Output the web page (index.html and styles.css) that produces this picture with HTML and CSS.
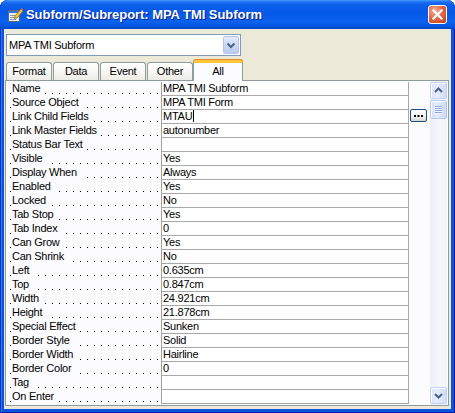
FILE: index.html
```html
<!DOCTYPE html>
<html>
<head>
<meta charset="utf-8">
<link rel="stylesheet" href="styles.css">
</head>
<body>
<div class="window">
  <div class="titlebar">
    <svg class="app-icon" width="16" height="16" viewBox="0 0 16 16">
      <rect x="1.5" y="3.5" width="11" height="11" fill="#F2F2EE" stroke="#55698F"/>
      <rect x="2" y="4" width="10" height="2" fill="#3D72D6"/>
      <rect x="3" y="8" width="5" height="1" fill="#8896B0"/>
      <rect x="3" y="10" width="7" height="1" fill="#8896B0"/>
      <rect x="3" y="12" width="6" height="1" fill="#8896B0"/>
      <polygon points="8,9 14,2 16,4 10,11 7.5,11.5" fill="#F6C23A" stroke="#9A6A10" stroke-width="0.8"/>
      <polygon points="14,2 15,1 16.5,2.5 16,4" fill="#E0603A"/>
    </svg>
    <span class="title">Subform/Subreport: MPA TMI Subform</span>
    <div class="close">
      <svg width="17" height="17" viewBox="0 0 17 17">
        <path d="M4.5 4.5 L12.5 12.5 M12.5 4.5 L4.5 12.5" stroke="#fff" stroke-width="2.2" stroke-linecap="square"/>
      </svg>
    </div>
  </div>
  <div class="client">
    <div class="combo">
      <span class="combo-text">MPA TMI Subform</span>
      <div class="combo-btn">
        <svg width="14" height="16" viewBox="0 0 14 16">
          <polyline points="3.5,6.5 7,10 10.5,6.5" fill="none" stroke="#4D6185" stroke-width="2"/>
        </svg>
      </div>
    </div>
    <div class="tabs">
      <div class="tab">Format</div>
      <div class="tab">Data</div>
      <div class="tab">Event</div>
      <div class="tab">Other</div>
      <div class="tab active">All</div>
    </div>
    <div class="page">
      <div class="grid">
        <div class="row"><div class="label"><span>Name</span></div><div class="value">MPA TMI Subform</div></div>
        <div class="row"><div class="label"><span>Source Object</span></div><div class="value">MPA TMI Form</div></div>
        <div class="row"><div class="label"><span>Link Child Fields</span></div><div class="value">MTAU<i class="caret"></i></div></div>
        <div class="row"><div class="label"><span>Link Master Fields</span></div><div class="value">autonumber</div></div>
        <div class="row"><div class="label"><span>Status Bar Text</span></div><div class="value"></div></div>
        <div class="row"><div class="label"><span>Visible</span></div><div class="value">Yes</div></div>
        <div class="row"><div class="label"><span>Display When</span></div><div class="value">Always</div></div>
        <div class="row"><div class="label"><span>Enabled</span></div><div class="value">Yes</div></div>
        <div class="row"><div class="label"><span>Locked</span></div><div class="value">No</div></div>
        <div class="row"><div class="label"><span>Tab Stop</span></div><div class="value">Yes</div></div>
        <div class="row"><div class="label"><span>Tab Index</span></div><div class="value">0</div></div>
        <div class="row"><div class="label"><span>Can Grow</span></div><div class="value">Yes</div></div>
        <div class="row"><div class="label"><span>Can Shrink</span></div><div class="value">No</div></div>
        <div class="row"><div class="label"><span>Left</span></div><div class="value">0.635cm</div></div>
        <div class="row"><div class="label"><span>Top</span></div><div class="value">0.847cm</div></div>
        <div class="row"><div class="label"><span>Width</span></div><div class="value">24.921cm</div></div>
        <div class="row"><div class="label"><span>Height</span></div><div class="value">21.878cm</div></div>
        <div class="row"><div class="label"><span>Special Effect</span></div><div class="value">Sunken</div></div>
        <div class="row"><div class="label"><span>Border Style</span></div><div class="value">Solid</div></div>
        <div class="row"><div class="label"><span>Border Width</span></div><div class="value">Hairline</div></div>
        <div class="row"><div class="label"><span>Border Color</span></div><div class="value">0</div></div>
        <div class="row"><div class="label"><span>Tag</span></div><div class="value"></div></div>
        <div class="row"><div class="label"><span>On Enter</span></div><div class="value"></div></div>
      </div>
      <div class="btncol">
        <div class="ellipsis">
          <svg width="15" height="11" viewBox="0 0 15 11">
            <rect x="3" y="6" width="2" height="2" fill="#000"/>
            <rect x="6.5" y="6" width="2" height="2" fill="#000"/>
            <rect x="10" y="6" width="2" height="2" fill="#000"/>
          </svg>
        </div>
      </div>
      <div class="scrollbar">
        <div class="sb-btn">
          <svg width="15" height="15" viewBox="0 0 15 15">
            <polyline points="4,9 7.5,5.5 11,9" fill="none" stroke="#4D6185" stroke-width="2"/>
          </svg>
        </div>
        <div class="thumb">
          <span></span><span></span><span></span><span></span>
        </div>
        <div class="track"></div>
        <div class="sb-btn">
          <svg width="15" height="15" viewBox="0 0 15 15">
            <polyline points="4,6 7.5,9.5 11,6" fill="none" stroke="#4D6185" stroke-width="2"/>
          </svg>
        </div>
      </div>
    </div>
  </div>
</div>
</body>
</html>
```
FILE: styles.css
```css
html, body {
  margin: 0;
  padding: 0;
}
body {
  width: 455px;
  height: 413px;
  overflow: hidden;
  background: #ffffff;
  font-family: "Liberation Sans", Arial, sans-serif;
  font-size: 11px;
  color: #000;
}
.window {
  width: 455px;
  height: 413px;
  box-sizing: border-box;
  display: flex;
  flex-direction: column;
  background: #0A55E0;
  border-radius: 8px 8px 0 0;
  box-shadow: inset 1px 0 0 #0831C9, inset -1px 0 0 #001EA0, inset 0 -1px 0 #001EA0, inset 2px 0 0 #2D78F0;
  overflow: hidden;
}
.titlebar {
  height: 29px;
  flex: none;
  display: flex;
  align-items: center;
  padding: 0 8px 0 7px;
  background: linear-gradient(to bottom, #4A9BFF 0px, #1D70F2 2px, #0A5EE8 5px, #0458E6 45%, #0A62EE 75%, #0555E0 90%, #0046C6 100%);
  border-radius: 8px 8px 0 0;
}
.app-icon {
  flex: none;
  margin-right: 3px;
}
.title {
  color: #fff;
  font-weight: bold;
  font-size: 13px;
  letter-spacing: -0.05px;
  text-shadow: 1px 1px 0 #0A1E8A;
  white-space: nowrap;
}
.close {
  margin-left: auto;
  width: 19px;
  height: 19px;
  box-sizing: border-box;
  border: 1px solid #fff;
  border-radius: 3px;
  background: radial-gradient(circle at 35% 30%, #F5B39B 0%, #E46A49 45%, #CD4A2A 80%, #B83A1C 100%);
  display: flex;
  align-items: center;
  justify-content: center;
}
.client {
  flex: 1;
  margin: 0 4px 4px 4px;
  background: #ECE9D8;
  display: flex;
  flex-direction: column;
  min-height: 0;
}
.combo {
  margin: 5px 0 0 2px;
  width: 235px;
  height: 22px;
  box-sizing: border-box;
  border: 1px solid #7F9DB9;
  background: #fff;
  display: flex;
  align-items: center;
  padding-left: 2px;
  letter-spacing: -0.25px;
}
.combo-text {
  white-space: nowrap;
}
.combo-btn {
  margin-left: auto;
  margin-right: 1px;
  width: 16px;
  height: 18px;
  box-sizing: border-box;
  border: 1px solid #B3C5EE;
  border-radius: 2px;
  background: linear-gradient(to bottom, #E4EBFB 0%, #CCD9F6 50%, #BACBF1 100%);
  display: flex;
  align-items: center;
  justify-content: center;
}
.tabs {
  margin: 4px 0 0 2px;
  height: 20px;
  display: flex;
  align-items: flex-end;
  gap: 1px;
  position: relative;
  z-index: 1;
}
.tab {
  width: 46px;
  height: 18px;
  box-sizing: border-box;
  border: 1px solid #919B9C;
  border-bottom: none;
  border-radius: 3px 3px 0 0;
  background: linear-gradient(to bottom, #FFFFFF 0%, #F7F7F4 50%, #ECEBE5 100%);
  text-align: center;
  line-height: 17px;
  letter-spacing: -0.25px;
}
.tab.active {
  width: 50px;
  height: 21px;
  margin-left: -1px;
  margin-bottom: -1px;
  border-top: 3px solid #FFC73C;
  box-shadow: 0 -1px 0 #E68B2C;
  background: #FCFCFE;
  line-height: 16px;
  padding-bottom: 2px;
}
.page {
  flex: 1;
  margin: 0 2px 3px 1px;
  border: 1px solid #919B9C;
  background: #FCFCFE;
  display: flex;
  min-height: 0;
}
.grid {
  padding-top: 1px;
  width: 403px;
  flex: none;
}
.row {
  display: grid;
  grid-template-columns: 155px 248px;
  height: 14px;
}
.label {
  padding-left: 6px;
  white-space: nowrap;
  overflow: hidden;
  line-height: 13px;
  letter-spacing: -0.25px;
  background-image: linear-gradient(to left, #000 1px, transparent 1px);
  background-size: 7px 1px;
  background-repeat: repeat-x;
  background-position: right 3px top 11px;
}
.label span {
  background: #FCFCFE;
  padding-right: 4px;
}
.value {
  box-sizing: border-box;
  height: 14px;
  border-left: 1px solid #A0A0A0;
  border-right: 1px solid #A8A8A8;
  border-bottom: 1px solid #A8A8A8;
  background: #fff;
  padding-left: 1px;
  line-height: 13px;
  letter-spacing: -0.25px;
  white-space: nowrap;
  overflow: hidden;
}
.caret {
  display: inline-block;
  width: 1px;
  height: 12px;
  background: #000;
  vertical-align: top;
  margin-left: 1px;
}
.btncol {
  width: 21px;
  flex: none;
  padding-top: 28px;
  box-sizing: border-box;
}
.ellipsis {
  margin-left: 1px;
  width: 17px;
  height: 13px;
  box-sizing: border-box;
  border: 1px solid #1D4E86;
  border-radius: 2px;
  background: linear-gradient(to bottom, #FFFFFF 0%, #F2F1EC 60%, #D8D4CA 100%);
  display: flex;
  align-items: center;
  justify-content: center;
}
.ellipsis svg {
  margin-top: -2px;
}
.scrollbar {
  width: 17px;
  flex: none;
  display: flex;
  flex-direction: column;
  padding: 1px 0;
  box-sizing: border-box;
  background: linear-gradient(to right, #EEF0F8 0%, #F6F7FC 60%, #F3F4FA 100%);
}
.sb-btn {
  height: 17px;
  flex: none;
  box-sizing: border-box;
  border: 1px solid #C2D2F5;
  border-radius: 2px;
  background: linear-gradient(to right, #D9E3FB 0%, #E6EDFD 40%, #CFDCFA 100%);
  box-shadow: inset 1px 1px 0 #fff;
  display: flex;
  align-items: center;
  justify-content: center;
}
.thumb {
  margin-top: 1px;
  height: 19px;
  flex: none;
  box-sizing: border-box;
  border: 1px solid #B6C8F2;
  border-radius: 2px;
  background: linear-gradient(to right, #D6E1FB 0%, #E4ECFD 40%, #CCDAF9 100%);
  box-shadow: inset 1px 1px 0 #fff;
  display: flex;
  flex-direction: column;
  align-items: center;
  justify-content: center;
  gap: 1px;
}
.thumb span {
  width: 7px;
  height: 1px;
  background: #8EA6D8;
  box-shadow: 0 1px 0 #F4F7FF;
}
.track {
  flex: 1;
}
```
